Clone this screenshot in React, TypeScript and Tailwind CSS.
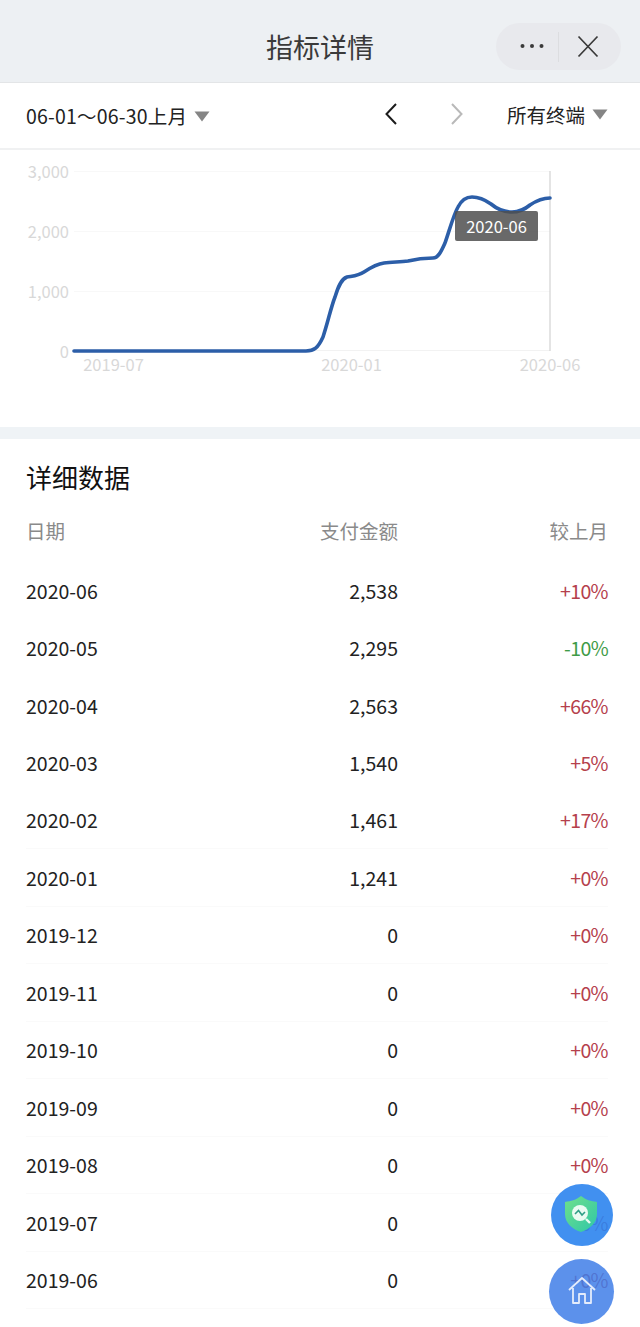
import React from "react";

const font = { fontFamily: '"Noto Sans CJK SC", "Noto Sans", sans-serif' };

const rows: [string, string, string, "up" | "down"][] = [
  ["2020-06", "2,538", "+10%", "up"],
  ["2020-05", "2,295", "-10%", "down"],
  ["2020-04", "2,563", "+66%", "up"],
  ["2020-03", "1,540", "+5%", "up"],
  ["2020-02", "1,461", "+17%", "up"],
  ["2020-01", "1,241", "+0%", "up"],
  ["2019-12", "0", "+0%", "up"],
  ["2019-11", "0", "+0%", "up"],
  ["2019-10", "0", "+0%", "up"],
  ["2019-09", "0", "+0%", "up"],
  ["2019-08", "0", "+0%", "up"],
  ["2019-07", "0", "+0%", "up"],
  ["2019-06", "0", "+0%", "up"],
];

function Caret() {
  return (
    <svg width="16" height="11" viewBox="0 0 16 11" className="shrink-0">
      <path d="M0.5 0.5H15.5L8 10.5Z" fill="#858585" />
    </svg>
  );
}

function Chart() {
  const line =
    "M74 351 H306 C314 351 318 348 323 337 C328 322 331 307 335 297 C338 287 341 279 347 277 C352 276 358 276 364 272 C370 268 376 264 384 263 C392 262 400 262 408 261 C416 259 424 258 433 258 C438 258 441 252 445 243 C449 232 453 216 458 207 C462 199 467 197 472 197 C478 197 484 199 491 204 C497 209 503 212 512 212 C519 212 524 210 530 205 C536 201 542 198 550 198";
  const labels: [number, number, string][] = [
    [69, 178, "3,000"],
    [69, 238, "2,000"],
    [69, 298, "1,000"],
    [69, 358, "0"],
  ];
  return (
    <div className="relative h-[277px] bg-white">
      <svg width="640" height="277" viewBox="0 150 640 277" className="block">
        {[171, 231, 291].map((y) => (
          <line key={y} x1="74" x2="550" y1={y + 0.5} y2={y + 0.5} stroke="#f8f8f8" />
        ))}
        <line x1="74" x2="550" y1="350.5" y2="350.5" stroke="#f2f2f2" />
        <line x1="550" x2="550" y1="171" y2="351" stroke="#d2d2d2" strokeWidth="1.2" />
        {labels.map(([x, y, t]) => (
          <text key={t} x={x} y={y} textAnchor="end" fontSize="16.5" fill="#d8d8d8" style={font}>
            {t}
          </text>
        ))}
        <text x="113.5" y="371" textAnchor="middle" fontSize="16.5" fill="#d8d8d8" style={font}>2019-07</text>
        <text x="351.5" y="371" textAnchor="middle" fontSize="16.5" fill="#d8d8d8" style={font}>2020-01</text>
        <text x="550" y="371" textAnchor="middle" fontSize="16.5" fill="#d8d8d8" style={font}>2020-06</text>
        <path d={line} fill="none" stroke="#2c5ea8" strokeWidth="3.6" strokeLinecap="round" strokeLinejoin="round" />
      </svg>
      <div className="absolute left-[455px] top-[61px] flex h-[30px] w-[83px] items-center justify-center rounded-[2px] bg-[#4f4f4f]/85 text-[16.5px] leading-none text-white">
        2020-06
      </div>
    </div>
  );
}

export default function App() {
  return (
    <div className="relative h-[1327px] w-[640px] overflow-hidden bg-white text-[#222]" style={font}>
      <header className="relative flex h-[83px] items-center justify-center border-b border-[#e3e5e7] bg-[#edf0f3] pt-[11px]">
        <span className="text-[27px] leading-none text-[#3a3a3a]">指标详情</span>
        <div className="absolute left-[496px] top-[23px] flex h-[47px] w-[125px] items-center rounded-full bg-[#e8e9ed]">
          <svg width="62" height="47" viewBox="0 0 62 47">
            <circle cx="26.5" cy="23" r="2" fill="#3a3a3a" />
            <circle cx="36" cy="23" r="2" fill="#3a3a3a" />
            <circle cx="45.5" cy="23" r="2" fill="#3a3a3a" />
          </svg>
          <div className="h-[30px] w-px bg-[#dcdde0]" />
          <svg width="62" height="47" viewBox="0 0 62 47">
            <path d="M19.5 13.5L38.5 33.5M38.5 13.5L19.5 33.5" stroke="#3a3a3a" strokeWidth="1.7" fill="none" />
          </svg>
        </div>
      </header>

      <div className="relative flex h-[67px] items-center border-b-2 border-[#f0f1f2] pl-[26px] pr-[32px]">
        <span className="text-[19.5px] leading-none tracking-[0.01em]">06-01～06-30上月</span>
        <span className="ml-[7px] mt-[1px]"><Caret /></span>
        <svg width="14" height="24" viewBox="0 0 14 24" className="ml-auto mr-[52px] -mt-[3px]">
          <path d="M12 2L2.5 12L12 22" stroke="#1c1c1c" strokeWidth="2" fill="none" />
        </svg>
        <svg width="14" height="24" viewBox="0 0 14 24" className="mr-[43px] -mt-[3px]">
          <path d="M2 2L11.5 12L2 22" stroke="#b9b9b9" strokeWidth="2" fill="none" />
        </svg>
        <span className="text-[19.5px] leading-none -mt-[1px]">所有终端</span>
        <span className="ml-[7px] -mt-[3px]"><Caret /></span>
      </div>

      <Chart />

      <div className="h-[12px] bg-[#eff3f6]" />

      <section className="pl-[26px] pr-[32px]">
        <h2 className="flex h-[76px] items-center text-[26px] font-normal leading-none text-[#111]">详细数据</h2>
        <div className="flex h-[32px] items-center text-[19.5px] leading-none text-[#8a8a8a]">
          <span className="w-[180px]">日期</span>
          <span className="w-[192px] text-right">支付金额</span>
          <span className="flex-1 text-right">较上月</span>
        </div>
        <div className="mt-[14.5px]">
          {rows.map(([d, v, c, dir], i) => (
            <div
              key={d}
              className={`flex h-[57.5px] items-center text-[19.5px] leading-none ${i >= 4 ? "border-b border-[#fafafa]" : ""}`}
            >
              <span className="w-[180px]">{d}</span>
              <span className="w-[192px] text-right">{v}</span>
              <span className={`flex-1 text-right tracking-[-0.03em] ${dir === "up" ? "text-[#b5404c]" : "text-[#3f9b47]"}`}>{c}</span>
            </div>
          ))}
        </div>
      </section>

      <div className="absolute left-[551px] top-[1184px] flex h-[62px] w-[62px] items-center justify-center rounded-full bg-[#2c84ee]/90">
        <svg width="36" height="40" viewBox="0 0 36 40" className="-ml-[3px] -mt-[2px]">
          <defs>
            <linearGradient id="sh" x1="0" y1="0" x2="1" y2="1">
              <stop offset="0" stopColor="#6fe08a" />
              <stop offset="1" stopColor="#2fc7a8" />
            </linearGradient>
          </defs>
          <path d="M18 2C23 6 28 7 34 8V20C34 29 27 35 18 38C9 35 2 29 2 20V8C8 7 13 6 18 2Z" fill="url(#sh)" />
          <circle cx="17" cy="19" r="8" fill="#eafbf2" />
          <path d="M12 20L15.5 16.5L19 21L22 18" stroke="#2f9e86" strokeWidth="1.6" fill="none" />
          <path d="M23 25L27 29" stroke="#eafbf2" strokeWidth="2.4" />
        </svg>
      </div>

      <div className="absolute left-[549px] top-[1259px] flex h-[65px] w-[65px] items-center justify-center rounded-full bg-[#3f7ee8]/85">
        <svg width="30" height="30" viewBox="0 0 30 30" className="-mt-[2px]">
          <path
            d="M2 14L15 2L28 14M6 12V27H12V18H18V27H24V12"
            fill="none"
            stroke="#e4ecfb"
            strokeWidth="1.8"
            strokeLinejoin="round"
          />
        </svg>
      </div>
    </div>
  );
}
